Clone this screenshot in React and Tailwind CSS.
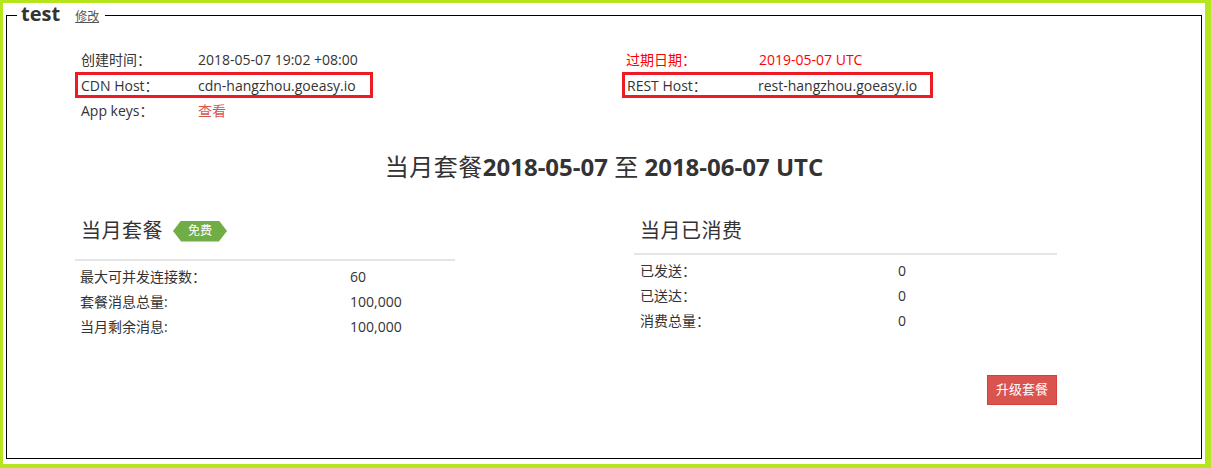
export default function App() {
  return (
    <div className="w-[1211px] h-[468px] bg-white border-solid border-[#b5e61d] border-t-[3px] border-l-[3px] border-r-[6px] border-b-[4px] px-[3px] font-['Open_Sans','Noto_Sans_CJK_SC',sans-serif] text-[#333] text-[14px]">
      <fieldset className="h-[456px] border border-solid border-black">
        <legend className="ml-[10px] pl-[4px] pr-[6px] leading-[22px]">
          <span className="text-[20px] font-bold leading-[22px]">test</span>
          <a className="ml-[15px] text-[12px] text-[#555] underline cursor-pointer">修改</a>
        </legend>

        <div className="mt-[19px] flex pl-[68px]">
          <div className="w-[547px]">
            <div className="h-[25px] w-[298px] border-[3px] border-transparent pl-[3px] flex items-center">
              <span className="w-[117px]">创建时间：</span>
              <span>2018-05-07 19:02 +08:00</span>
            </div>
            <div className="h-[26px] w-[298px] border-[3px] border-[#ed1c24] pl-[3px] flex items-center">
              <span className="w-[117px]">CDN Host：</span>
              <span>cdn-hangzhou.goeasy.io</span>
            </div>
            <div className="h-[25px] w-[298px] border-[3px] border-transparent pl-[3px] flex items-center">
              <span className="w-[117px]">App keys：</span>
              <a className="text-[#d9534f] cursor-pointer">查看</a>
            </div>
          </div>
          <div>
            <div className="h-[25px] w-[311px] border-[3px] border-transparent pl-[1px] flex items-center text-[#ff0000]">
              <span className="w-[133px]">过期日期：</span>
              <span>2019-05-07 UTC</span>
            </div>
            <div className="h-[26px] w-[311px] border-[3px] border-[#ed1c24] pl-[2px] flex items-center">
              <span className="w-[131px]">REST Host：</span>
              <span>rest-hangzhou.goeasy.io</span>
            </div>
          </div>
        </div>

        <h2 className="mt-[27px] text-center text-[24px] leading-[34px] font-bold">
          <span className="font-normal tracking-[0.5px]">当月套餐</span>2018-05-07 <span className="font-normal">至</span> 2018-06-07 UTC
        </h2>

        <div className="mt-[33px] flex pl-[68px]">
          <div className="w-[380px]">
            <div className="pb-[14px] border-b-2 border-[#e5e5e5]">
              <div className="h-[28px] pl-[6px] flex items-center">
                <span className="text-[20px] tracking-[0.5px]">当月套餐</span>
                <span className="ml-[10px] w-[54px] h-[21px] bg-[#70ad47] text-white text-[12px] flex items-center justify-center [clip-path:polygon(15%_0,85%_0,100%_50%,85%_100%,15%_100%,0_50%)]">
                  免费
                </span>
              </div>
            </div>
            <div className="mt-[3px]">
              <div className="h-[25px] pl-[5px] flex items-center">
                <span className="w-[270px]">最大可并发连接数：</span>
                <span>60</span>
              </div>
              <div className="h-[25px] pl-[5px] flex items-center">
                <span className="w-[270px]">套餐消息总量:</span>
                <span>100,000</span>
              </div>
              <div className="h-[25px] pl-[5px] flex items-center">
                <span className="w-[270px]">当月剩余消息:</span>
                <span>100,000</span>
              </div>
            </div>
          </div>

          <div className="ml-[179px] w-[423px]">
            <div className="pb-[8px] border-b-2 border-[#e5e5e5]">
              <div className="h-[28px] pl-[6px] flex items-center">
                <span className="text-[20px] tracking-[0.5px]">当月已消费</span>
              </div>
            </div>
            <div className="mt-[3px]">
              <div className="h-[25px] pl-[6px] flex items-center">
                <span className="w-[258px]">已发送：</span>
                <span>0</span>
              </div>
              <div className="h-[25px] pl-[6px] flex items-center">
                <span className="w-[258px]">已送达：</span>
                <span>0</span>
              </div>
              <div className="h-[25px] pl-[6px] flex items-center">
                <span className="w-[258px]">消费总量：</span>
                <span>0</span>
              </div>
            </div>
            <div className="mt-[42px] flex justify-end">
              <button className="w-[70px] h-[30px] bg-[#d9534f] border border-[#d43f3a] text-white text-[13px] flex items-center justify-center">
                升级套餐
              </button>
            </div>
          </div>
        </div>
      </fieldset>
    </div>
  );
}
